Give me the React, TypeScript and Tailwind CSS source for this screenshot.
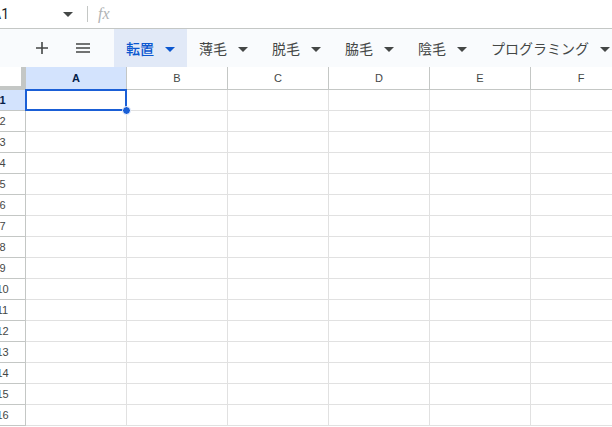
import React from "react";

const tabs = ["転置", "薄毛", "脱毛", "脇毛", "陰毛", "プログラミング"];
const columns = ["A", "B", "C", "D", "E", "F"];
const rows = Array.from({ length: 16 }, (_, i) => i + 1);

function Caret({ className }: { className?: string }) {
  return (
    <svg width="10" height="5" viewBox="0 0 10 5" className={className}>
      <path d="M0 0h10L5 5z" fill="currentColor" />
    </svg>
  );
}

function FormulaBar() {
  return (
    <div className="flex h-[29px] items-center border-b border-[#c4c7c5] bg-white">
      <div className="flex w-[107px] items-center pl-[12px] pr-[14px]">
        <span className="text-[14px] text-[#1f1f1f]">A1</span>
        <Caret className="ml-auto text-[#444746]" />
      </div>
      <div className="h-[16px] w-px bg-[#c4c7c5]" />
      <span className="ml-[10px] font-['Liberation_Serif',serif] text-[16px] italic text-[#b0b3b5]">fx</span>
    </div>
  );
}

function TabBar() {
  return (
    <div className="flex h-[38px] items-stretch bg-[#f9fbfd]">
      <div className="flex w-[134px] items-center">
        <svg width="12" height="12" viewBox="0 0 12 12" className="ml-[56px] text-[#444746]">
          <path d="M6 0v12M0 6h12" stroke="currentColor" strokeWidth="1.6" />
        </svg>
        <svg width="14" height="10" viewBox="0 0 14 10" className="ml-[28px] text-[#444746]">
          <path d="M0 1h14M0 5h14M0 9h14" stroke="currentColor" strokeWidth="1.6" />
        </svg>
      </div>
      {tabs.map((t, i) => (
        <div
          key={t}
          className={`flex items-center px-3 pt-[2px] text-[14px] ${
            i === 0 ? "bg-[#e1e9f7] font-medium text-[#0b57d0]" : "text-[#444746]"
          }`}
        >
          <span>{t}</span>
          <Caret className="ml-[11px]" />
        </div>
      ))}
    </div>
  );
}

function Grid() {
  return (
    <div className="font-['Liberation_Sans',Arial,sans-serif] text-[11px] text-[#444746]">
      <div className="flex h-[23px]">
        <div className="w-[46px] shrink-0 border-b-[4px] border-r-[5px] border-[#c4c7c5] bg-white" />
        {columns.map((c, i) => (
          <div
            key={c}
            className={`flex w-[101px] shrink-0 items-center justify-center border-b border-r border-[#c4c7c5] ${
              i === 0 ? "bg-[#d3e3fd] font-bold text-[#041e49]" : "bg-white"
            }`}
          >
            {c}
          </div>
        ))}
      </div>
      {rows.map((r) => (
        <div key={r} className="flex h-[21px]">
          <div
            className={`flex w-[46px] shrink-0 items-center justify-center border-b border-r border-[#c4c7c5] ${
              r === 1 ? "bg-[#d3e3fd] font-bold text-[#041e49]" : "bg-white"
            }`}
          >
            {r}
          </div>
          {columns.map((c, i) => (
            <div key={c} className="relative w-[101px] shrink-0 border-b border-r border-[#e1e1e1]">
              {r === 1 && i === 0 && (
                <>
                  <div className="absolute -left-px -top-px bottom-[-1px] right-[-1px] z-10 border-2 border-[#1a5fd6]" />
                  <div className="absolute bottom-[-5px] right-[-5px] z-10 h-[9px] w-[9px] rounded-full border border-white bg-[#1a5fd6]" />
                </>
              )}
            </div>
          ))}
        </div>
      ))}
    </div>
  );
}

export default function App() {
  return (
    <div className="h-[427px] w-[612px] overflow-hidden bg-white font-['Roboto','Noto_Sans_CJK_JP',sans-serif]">
      <div className="ml-[-20px] w-[800px]">
        <FormulaBar />
        <TabBar />
        <Grid />
      </div>
    </div>
  );
}
